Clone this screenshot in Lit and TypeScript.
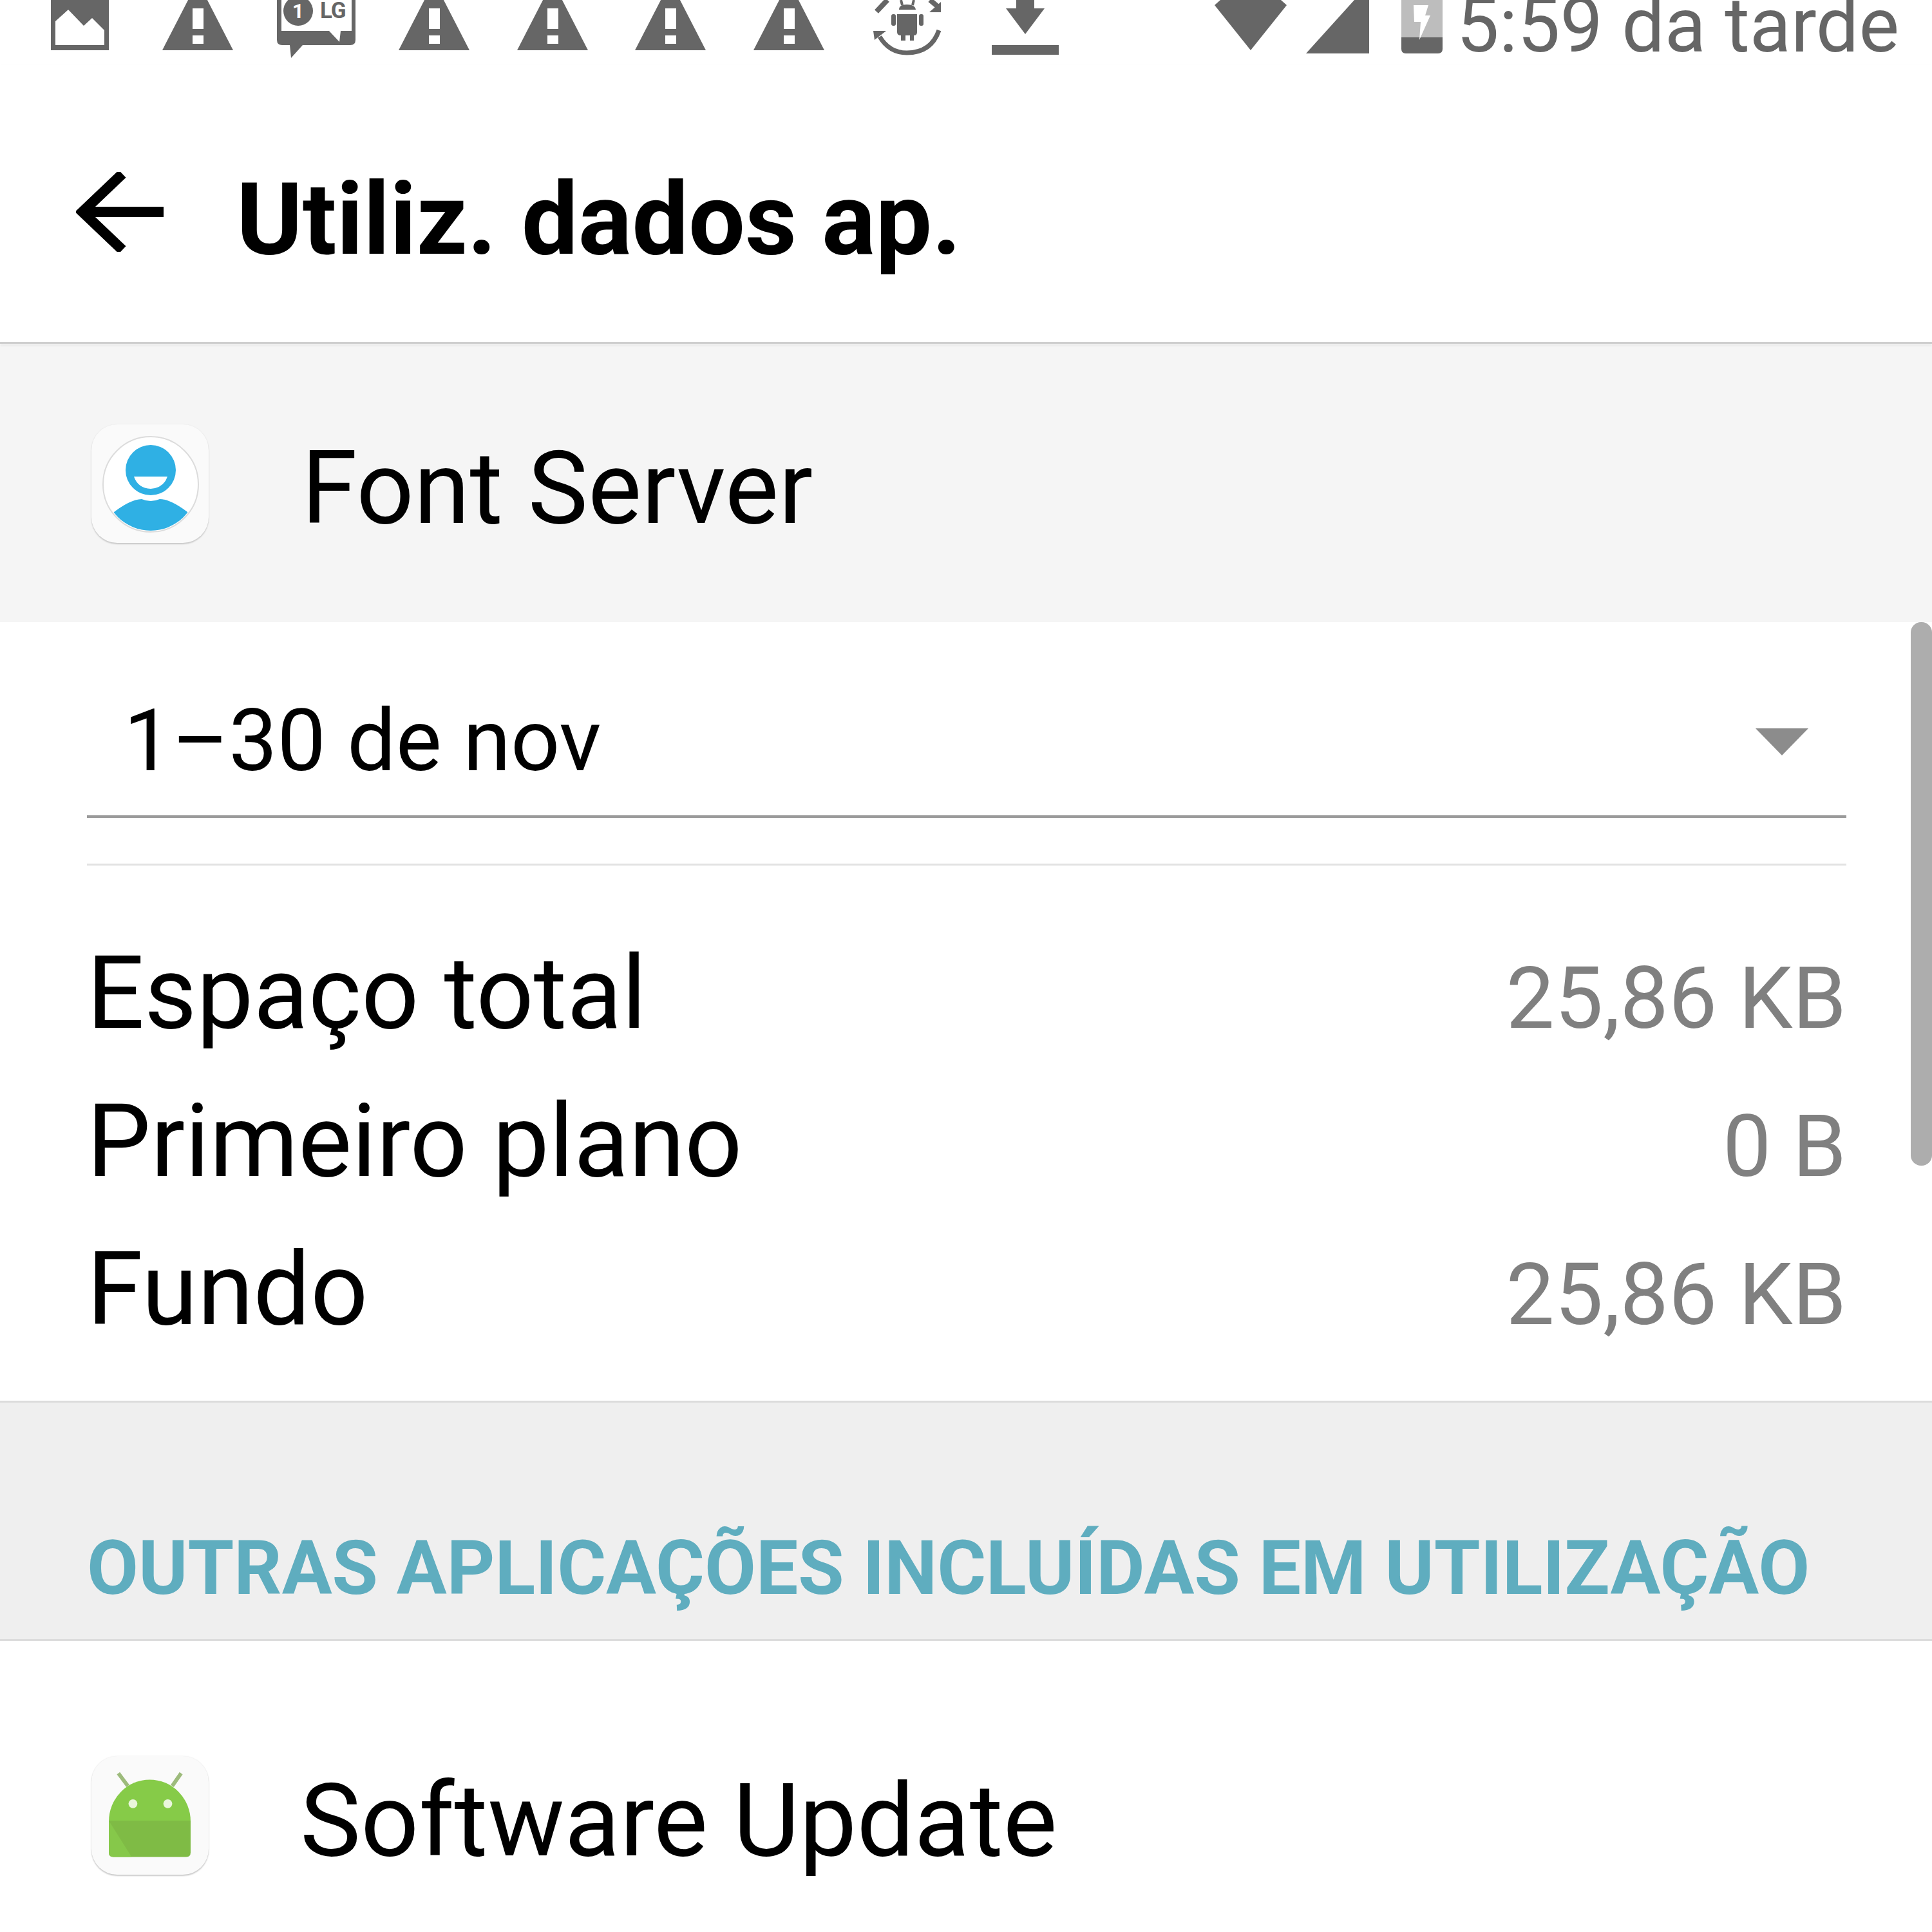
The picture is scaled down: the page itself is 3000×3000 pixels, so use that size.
import { LitElement, html, css, svg } from 'lit'
import { customElement } from 'lit/decorators.js'

const warning = svg`<svg class="ic" width="110" height="100" viewBox="0 0 110 100">
  <path fill="#666" d="M55 -29 L110 78 L0 78 Z" />
  <rect x="47" y="13" width="17" height="32" fill="#fff" />
  <rect x="47" y="55" width="17" height="13" fill="#fff" />
</svg>`

const picture = svg`<svg class="ic" width="90" height="100" viewBox="0 0 90 100">
  <path fill="#666" d="M0 0 H90 V78 H0 Z" />
  <path fill="#fff" d="M7 33 L27 15 L51 40 L64 28 L83 47 V70 H7 Z" />
</svg>`

const lgChat = svg`<svg class="ic" width="122" height="100" viewBox="0 0 122 100">
  <path fill="#666" d="M0 0 H122 V62 Q122 70 114 70 H40 L22 90 L20 70 H8 Q0 70 0 62 Z" />
  <path fill="#fff" d="M7 0 H116 V48 H99 L97 65 L81 48 H7 Z" />
  <circle cx="33" cy="17" r="23" fill="#666" />
  <text x="33" y="28" font-size="32" font-weight="700" fill="#fff" text-anchor="middle">1</text>
  <text x="67" y="28" font-size="35" font-weight="700" fill="#666" letter-spacing="-1">LG</text>
</svg>`

const bugSync = svg`<svg class="ic" width="115" height="100" viewBox="0 0 115 100">
  <path fill="none" stroke="#666" stroke-width="7" d="M107 47 Q95 82 57 82 Q30 82 15 57" />
  <path fill="#666" d="M5 48 H25 L7 62 Z M110 3 V19 H92 Z" />
  <path fill="none" stroke="#666" stroke-width="8" d="M27 0 L10 18 M93 0 L105 10" />
  <path fill="#666" d="M45 15 Q45 7 57 7 Q70 7 71 15 Z" />
  <path fill="none" stroke="#666" stroke-width="4" d="M48 0 L50 8 M68 0 L66 8" />
  <path fill="#666" d="M42 22 H73 V50 Q73 55 68 55 V63 H62 V55 H55 V63 H48 V55 Q42 55 42 50 Z" />
  <rect x="33" y="22" width="7" height="18" rx="3" fill="#666" />
  <rect x="76" y="22" width="7" height="18" rx="3" fill="#666" />
</svg>`

const download = svg`<svg class="ic" width="104" height="100" viewBox="0 0 104 100">
  <path fill="#666" d="M38 -4 H66 V13 H82 L52 53 L22 13 H38 Z" />
  <rect x="0" y="70" width="104" height="15" fill="#666" />
</svg>`

const wifi = svg`<svg width="112" height="100" viewBox="0 0 112 100">
  <path fill="#666" d="M0 8 L9 0 H103 L112 8 L56 78 Z" />
</svg>`

const signal = svg`<svg width="98" height="100" viewBox="0 0 98 100">
  <path fill="#666" d="M0 83 L75 0 H98 V83 Z" />
</svg>`

const battery = svg`<svg width="64" height="100" viewBox="0 0 64 100">
  <rect x="0" y="0" width="64" height="60" fill="#bdbdbd" />
  <path fill="#666" d="M0 58 H64 V76 Q64 83 57 83 H7 Q0 83 0 76 Z" />
  <path fill="#fff" d="M19 8 H42 L37 24 H45 L28 62 L30 34 H20 Z" />
</svg>`

const contactIcon = svg`<svg class="app-ic" viewBox="0 0 182 184">
  <defs>
    <clipPath id="face"><circle cx="92" cy="93" r="72" /></clipPath>
  </defs>
  <circle cx="92" cy="93" r="74" fill="#fff" stroke="#dcdcdc" stroke-width="2" />
  <circle cx="92" cy="71" r="39" fill="#2fb0e4" />
  <path fill="#fff" d="M66 81 H118 Q112 99 92 100 Q72 99 66 81 Z" />
  <path clip-path="url(#face)" fill="#2fb0e4" d="M30 184 V140 Q60 116 78 116 Q92 122 106 116 Q124 116 154 140 V184 Z" />
</svg>`

const androidIcon = svg`<svg class="app-ic" viewBox="0 0 182 187">
  <path stroke="#9dbb7c" stroke-width="6" d="M41 27 L56 47 M140 27 L126 47" />
  <path fill="#86cb48" d="M26 103 A64.500 66 0 0 1 155 103 Z" />
  <path fill="#7fbb45" d="M26 102 H155 V152 Q155 159 148 159 H33 Q26 159 26 152 Z" />
  <path fill="#86c84a" d="M26 102 L62 159 H33 Q26 159 26 152 Z" />
  <circle cx="64" cy="75" r="7" fill="#eaf6dc" />
  <circle cx="119" cy="75" r="7" fill="#eaf6dc" />
</svg>`

@customElement('app-root')
export class AppRoot extends LitElement {
  render() {
    return html`
      <div class="status">
        <div class="notifs">
          ${[picture, warning, lgChat, warning, warning, warning, warning, bugSync, download].map(
            (icon) => html`<span class="slot">${icon}</span>`,
          )}
        </div>
        <div class="sys">
          ${wifi}${signal}${battery}
          <span class="clock">5:59 da tarde</span>
        </div>
      </div>

      <header class="toolbar">
        <svg class="back" width="136" height="124" viewBox="0 0 136 124">
          <path fill="none" stroke="#000" stroke-width="16" d="M72 3 L10 62 L72 121 M10 62 H136" />
        </svg>
        <h1>Utiliz. dados ap.</h1>
      </header>

      <div class="app-band">
        <span class="tile">${contactIcon}</span>
        <span class="app-name">Font Server</span>
      </div>

      <main class="content">
        <div class="scrollbar"></div>
        <div class="spinner">
          <span>1–30 de nov</span>
          <i class="caret"></i>
        </div>
        <div class="rule"></div>
        <div class="stats">
          <div class="stat"><span class="k">Espaço total</span><span class="v">25,86 KB</span></div>
          <div class="stat"><span class="k">Primeiro plano</span><span class="v">0 B</span></div>
          <div class="stat"><span class="k">Fundo</span><span class="v">25,86 KB</span></div>
        </div>
        <div class="section"><span>OUTRAS APLICAÇÕES INCLUÍDAS EM UTILIZAÇÃO</span></div>
        <div class="app-row">
          <span class="tile">${androidIcon}</span>
          <span class="app-name wide">Software Update</span>
        </div>
      </main>
    `
  }

  static styles = [
    css`
      :host {
        display: block;
        width: 3000px;
        height: 3000px;
        overflow: hidden;
        background: #fff;
        font-family: Roboto, 'Liberation Sans', sans-serif;
        color: #000;
      }

      .status {
        display: flex;
        justify-content: space-between;
        height: 100px;
        overflow: hidden;
        padding: 0 51px 0 32px;
      }

      .notifs {
        display: flex;
      }

      .slot {
        width: 183.5px;
        height: 100px;
        display: flex;
        justify-content: center;
      }

      .ic {
        flex: none;
        font-family: Roboto, sans-serif;
      }

      .sys {
        display: flex;
        height: 100px;
      }

      .sys svg:nth-child(2) {
        margin-left: 30px;
      }

      .sys svg:nth-child(3) {
        margin-left: 50px;
      }

      .clock {
        margin-left: 21px;
        font-size: 118px;
        line-height: 100px;
        color: #666;
        white-space: nowrap;
        margin-top: -10px;
      }

      .toolbar {
        display: flex;
        align-items: center;
        height: 434px;
        padding-left: 118px;
        border-bottom: 3px solid #cfcfcf;
        box-shadow: 0 2px 4px rgba(0, 0, 0, 0.08);
        box-sizing: border-box;
        position: relative;
        margin-bottom: 1px;
      }

      .back {
        margin-top: 26px;
      }

      h1 {
        margin: 50px 0 0 113px;
        font-size: 156px;
        font-weight: 700;
        line-height: 1;
      }

      .app-band {
        display: flex;
        align-items: center;
        height: 431px;
        padding-left: 142px;
        background: #f5f5f5;
      }

      .tile {
        width: 182px;
        height: 184px;
        flex: none;
        border-radius: 40px;
        background: #fafafa;
        box-shadow: 0 2px 2px #c9c9c9, 0 0 2px #e4e4e4;
        display: block;
      }

      .app-ic {
        display: block;
        width: 100%;
        height: 100%;
      }

      .app-name {
        margin: 16px 0 0 144px;
        font-size: 157px;
        line-height: 1;
      }

      .app-name.wide {
        margin-left: 142px;
        font-size: 158.500px;
      }

      .content {
        position: relative;
      }

      .scrollbar {
        position: absolute;
        top: 0;
        right: 0;
        width: 33px;
        height: 844px;
        border-radius: 16px;
        background: #adadad;
      }

      .spinner {
        display: flex;
        align-items: center;
        justify-content: space-between;
        height: 304px;
        box-sizing: border-box;
        margin: 0 133px 0 135px;
        padding: 68px 59px 0 57px;
        border-bottom: 4px solid #9a9a9a;
        font-size: 134px;
      }

      .caret {
        width: 0;
        height: 0;
        margin-top: 4px;
        border-left: 41px solid transparent;
        border-right: 41px solid transparent;
        border-top: 42px solid #8c8c8c;
      }

      .rule {
        height: 3px;
        margin: 71px 133px 0 135px;
        background: #e2e2e2;
      }

      .stats {
        padding: 106px 133px 0 135px;
        height: 725px;
        box-sizing: content-box;
      }

      .stat {
        display: flex;
        justify-content: space-between;
        align-items: baseline;
        height: 230px;
      }

      .k {
        font-size: 157px;
      }

      .v {
        font-size: 134px;
        color: #808080;
      }

      .section {
        display: flex;
        align-items: flex-end;
        height: 373px;
        box-sizing: border-box;
        padding: 0 0 42px 135px;
        background: #efefef;
        border-top: 3px solid #dcdcdc;
        border-bottom: 3px solid #dcdcdc;
        font-size: 116px;
        font-weight: 700;
        color: #5fadbf;
        white-space: nowrap;
      }

      .app-row {
        display: flex;
        align-items: center;
        height: 290px;
        padding: 126px 0 0 142px;
        box-sizing: content-box;
      }
    `,
  ]
}

declare global {
  interface HTMLElementTagNameMap {
    'app-root': AppRoot
  }
}
